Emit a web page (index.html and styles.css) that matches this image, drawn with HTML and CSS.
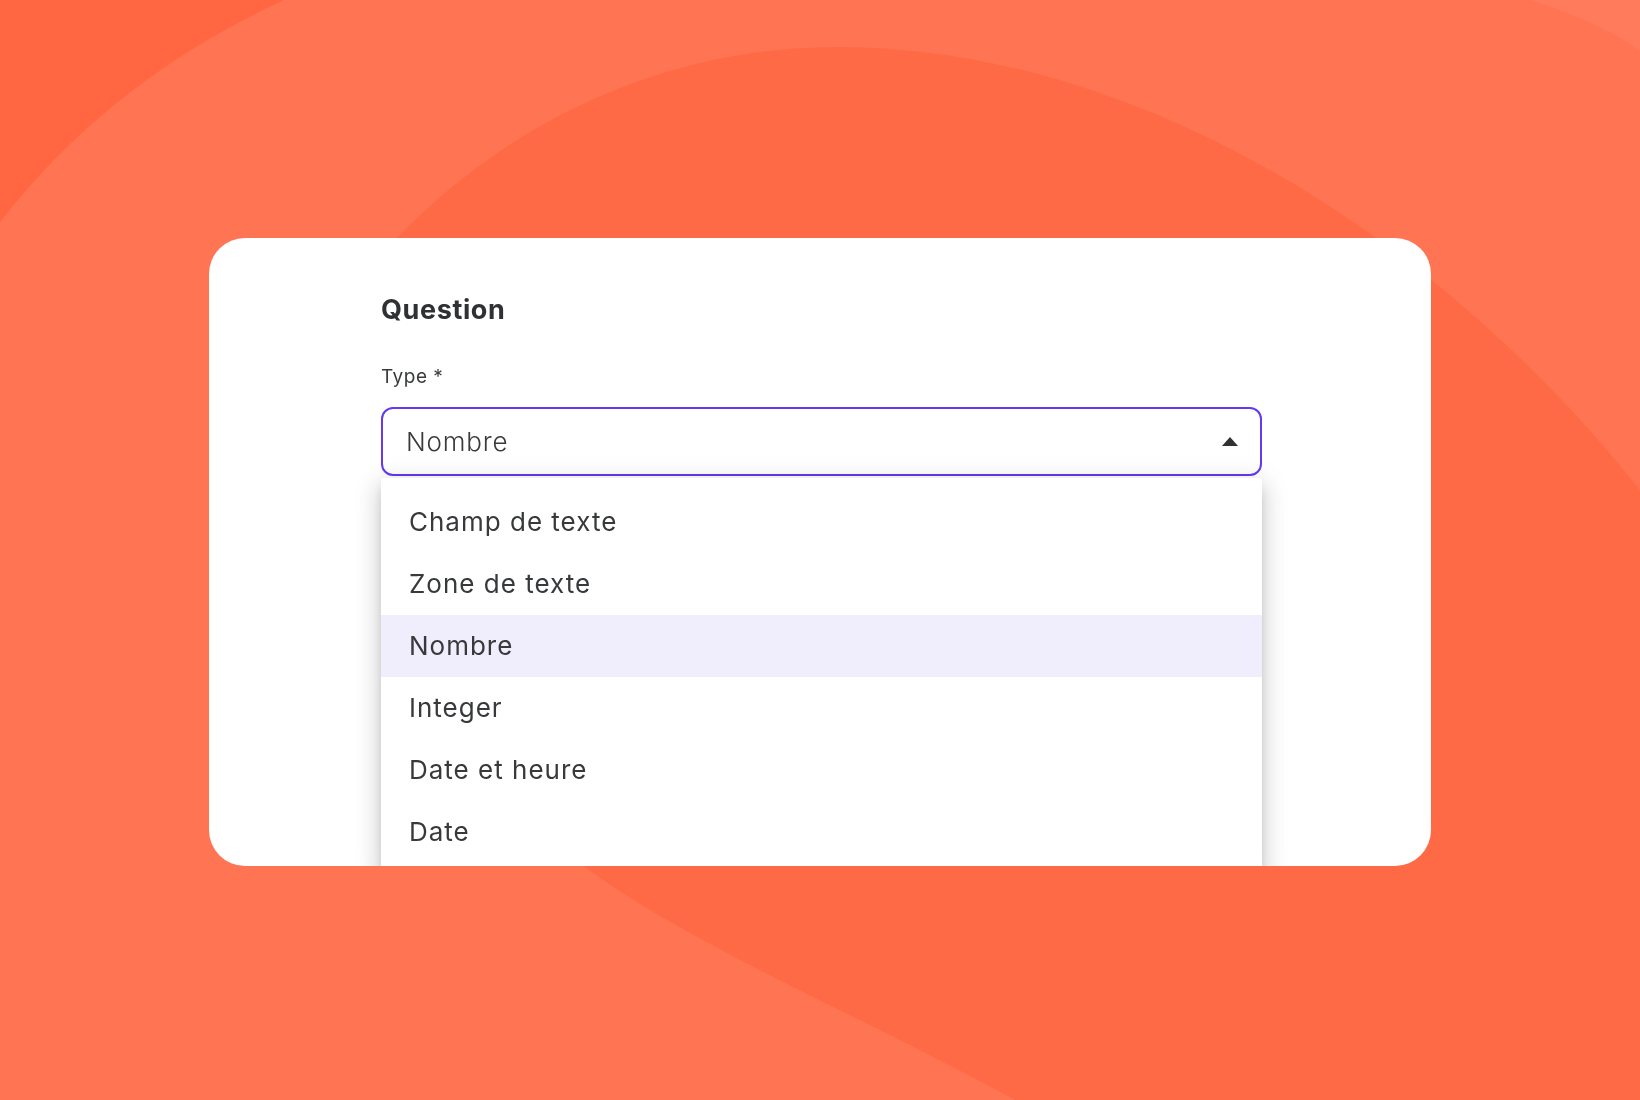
FILE: index.html
```html
<!DOCTYPE html>
<html lang="fr">
<head>
    <meta charset="UTF-8">
    <meta name="viewport" content="width=device-width, initial-scale=1.0">
    <title>Question - Type</title>
    <link rel="stylesheet" href="styles.css">
</head>
<body>

    <!-- fond décoratif derrière la carte -->
    <div class="backdrop">
        <svg width="1640" height="1100" viewBox="0 0 1640 1100" preserveAspectRatio="none">
            <rect x="0" y="0" width="1640" height="1100" fill="#ff7452"/>
            <path d="M0 0 L284 0 Q110 80 0 222 Z" fill="#ff6641"/>
            <path d="M1530 0 Q1590 18 1640 50 L1640 0 Z" fill="#ff7b5c"/>
            <path d="M397 238 C520 110 680 47 837 47 C1150 47 1450 250 1640 490 L1640 1100 L1015 1100 C850 1010 700 950 586 868 C450 700 380 450 397 238 Z" fill="#ff6a46"/>
        </svg>
    </div>

    <div class="card">
        <div class="form">
            <h2 class="title">Question</h2>
            <label class="label" for="type">Type *</label>
            <div class="select-wrap">
                <div class="select" id="type">
                    <span class="select-value">Nombre</span>
                    <span class="arrow"></span>
                </div>
                <ul class="menu">
                    <li class="option">Champ de texte</li>
                    <li class="option">Zone de texte</li>
                    <li class="option selected">Nombre</li>
                    <li class="option">Integer</li>
                    <li class="option">Date et heure</li>
                    <li class="option">Date</li>
                </ul>
            </div>
        </div>
    </div>

</body>
</html>
```

FILE: styles.css
```css
body {
    font-family: 'Inter', 'Liberation Sans', sans-serif;
    margin: 0;
    padding-top: 238px;
    height: 1100px;
    box-sizing: border-box;
    display: flex;
    justify-content: center;
    align-items: flex-start;
    overflow: hidden;
    color: #38393b;
    background-color: #ff7452;
}

.backdrop {
    position: fixed;
    top: 0;
    left: 0;
    z-index: -1;
    line-height: 0;
}

.card {
    width: 1222px;
    height: 628px;
    box-sizing: border-box;
    padding: 57px 169px 0 172px;
    background-color: #ffffff;
    border-radius: 36px;
    overflow: hidden;
}

.form {
    display: flex;
    flex-direction: column;
}

.title {
    margin: 0;
    font-size: 27px;
    line-height: 30px;
    font-weight: 700;
    letter-spacing: 0.6px;
    color: #2f3133;
}

.label {
    margin-top: 40px;
    font-size: 19px;
    line-height: 24px;
    letter-spacing: 0.5px;
    color: #3a3b3d;
}

.select-wrap {
    position: relative;
    margin-top: 18px;
}

.select {
    height: 69px;
    box-sizing: border-box;
    border: 2px solid #6439f0;
    border-radius: 12px;
    padding: 0 22px 0 23px;
    display: flex;
    align-items: center;
    justify-content: space-between;
}

.select-value {
    font-size: 26px;
    line-height: 32px;
    font-weight: 300;
    letter-spacing: 0.8px;
    color: #3a3a3c;
}

.arrow {
    width: 0;
    height: 0;
    border-left: 8.5px solid transparent;
    border-right: 8.5px solid transparent;
    border-bottom: 9px solid #2f3133;
}

/* le menu déroulant passe par-dessus le reste du formulaire */
.menu {
    position: absolute;
    top: 71px;
    left: 0;
    right: 0;
    margin: 0;
    padding: 13px 0;
    list-style: none;
    background-color: #ffffff;
    border-radius: 4px;
    box-shadow: 0 6px 10px -4px rgba(0, 0, 0, 0.18), 0 10px 22px 2px rgba(0, 0, 0, 0.12), 0 4px 28px 4px rgba(0, 0, 0, 0.08);
}

.option {
    height: 62px;
    padding-left: 28px;
    display: flex;
    align-items: center;
    font-size: 26px;
    line-height: 30px;
    letter-spacing: 1px;
    color: #38393b;
}

.option.selected {
    background-color: #f0edfc;
}
```
